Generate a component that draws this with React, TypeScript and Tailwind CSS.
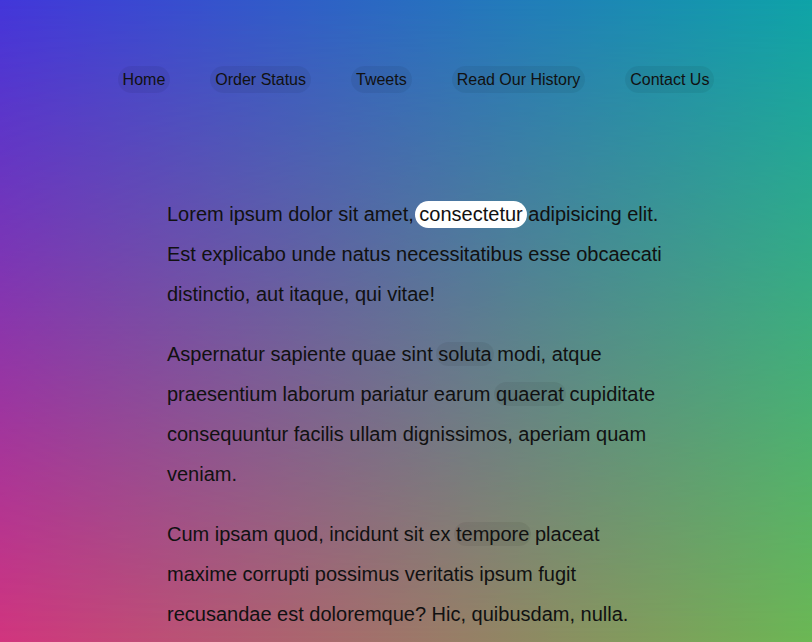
import React from 'react';

const links = ['Home', 'Order Status', 'Tweets', 'Read Our History', 'Contact Us'];

const App: React.FC = () => {
  return (
    <div className="relative h-screen overflow-hidden bg-[linear-gradient(to_right,#d2357e,#6cb854)] font-['Liberation_Sans',Arial,sans-serif] text-[#111]">
      {/* top colour layer, faded out towards the bottom */}
      <div className="absolute inset-0 bg-[linear-gradient(to_right,#4236da,#0ea3a8)] [mask-image:linear-gradient(to_bottom,#000,transparent)]" />

      <div className="relative">
        <nav className="flex justify-center gap-10 pl-5 pt-[66px]">
          {links.map(l => (
            <a key={l} className="rounded-full bg-black/[0.06] px-[5px] py-1 text-base leading-[19px]">
              {l}
            </a>
          ))}
        </nav>

        <div className="pl-[22px]">
          <main className="mx-auto mt-[101px] w-[500px] text-xl leading-10">
            <p className="mb-5">
              Lorem ipsum dolor sit amet,{' '}
              <span className="-mx-1 inline-block rounded-full bg-white px-1 leading-[27px]">consectetur</span>{' '}
              adipisicing elit. Est explicabo unde natus necessitatibus esse obcaecati distinctio, aut itaque, qui vitae!
            </p>
            <p className="mb-5">
              Aspernatur sapiente quae sint{' '}
              <span className="-mx-[2px] inline-block rounded-full bg-black/[0.06] px-[2px] leading-[24px]">soluta</span> modi, atque
              praesentium laborum pariatur earum{' '}
              <span className="-mx-[2px] inline-block rounded-full bg-black/[0.06] px-[2px] leading-[24px]">quaerat</span> cupiditate
              consequuntur facilis ullam dignissimos, aperiam quam veniam.
            </p>
            <p className="mb-5">
              Cum ipsam quod, incidunt sit ex{' '}
              <span className="-mx-[2px] inline-block rounded-full bg-black/[0.06] px-[2px] leading-[24px]">tempore</span> placeat
              maxime corrupti possimus veritatis ipsum fugit recusandae est doloremque? Hic, quibusdam, nulla.
            </p>
          </main>
        </div>
      </div>
    </div>
  );
};

export default App;
